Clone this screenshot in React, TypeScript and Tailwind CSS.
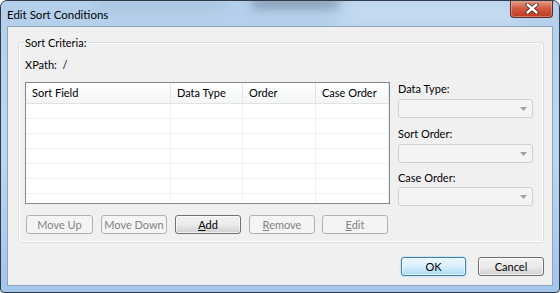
import React from 'react'

const font = { fontFamily: 'Lato, "Noto Sans", sans-serif' }

function DisabledButton({ children, w = 'w-[66px]' }: { children: React.ReactNode; w?: string }) {
  return (
    <div className={`${w} h-[19px] flex items-center justify-center whitespace-nowrap rounded-[3px] border border-[#adb2b5] bg-[#f4f4f4] text-[#838383] leading-none`}>
      {children}
    </div>
  )
}

function NormalButton({ children, isDefault = false }: { children: React.ReactNode; isDefault?: boolean }) {
  return (
    <div
      className={
        isDefault
          ? 'w-[65px] h-[19px] flex items-center justify-center whitespace-nowrap rounded-[3px] border border-[#3c7fb1] bg-gradient-to-b from-[#eaf6fd] via-[#d9f0fc] to-[#a7d9f5] shadow-[inset_0_0_0_1px_#ffffffb0,0_0_2px_#7ec4ee] text-black leading-none'
          : 'w-[66px] h-[19px] flex items-center justify-center whitespace-nowrap rounded-[3px] border border-[#707070] bg-gradient-to-b from-[#f2f2f2] via-[#ebebeb] to-[#cfcfcf] shadow-[inset_0_0_0_1px_#ffffffb0] text-black leading-none'
      }
    >
      {children}
    </div>
  )
}

function Combo() {
  return (
    <div className="w-[135px] h-[19px] rounded-[3px] border border-[#cfcfcf] bg-[#f4f4f4] flex items-center justify-end pr-[5px]">
      <svg width="7" height="4" viewBox="0 0 7 4">
        <path d="M0 0h7L3.5 4z" fill="#a0a0a0" />
      </svg>
    </div>
  )
}

const columns = [
  { name: 'Sort Field', w: 'w-[145px]' },
  { name: 'Data Type', w: 'w-[72px]' },
  { name: 'Order', w: 'w-[73px]' },
  { name: 'Case Order', w: 'flex-1' },
]

function SortList() {
  return (
    <div className="w-[365px] h-[122px] border border-[#828790] bg-white flex flex-col overflow-hidden">
      <div className="h-[21px] flex shrink-0 bg-gradient-to-b from-white to-[#f4f5f6] border-b border-[#e2e3e5]">
        {columns.map((c) => (
          <div key={c.name} className={`${c.w} border-r border-[#e3e4e6] flex items-center pl-[6px] text-black`}>
            {c.name}
          </div>
        ))}
      </div>
      {[0, 1, 2, 3, 4, 5, 6].map((r) => (
        <div key={r} className="h-[15px] flex border-b border-[#f0f0f0] shrink-0">
          {columns.map((c) => (
            <div key={c.name} className={`${c.w} border-r border-[#f0f0f0]`} />
          ))}
        </div>
      ))}
    </div>
  )
}

export default function App() {
  return (
    <div className="w-[560px] h-[293px] text-[11px] text-black" style={font}>
      <div className="relative w-[560px] h-[293px] flex flex-col rounded-t-[7px] rounded-b-[4px] border border-[#2f3b48] bg-gradient-to-b from-[#b4cfeb] via-[#bed7f0] to-[#a4c5ea] px-[6px] pb-[6px] overflow-hidden">
        {/* blurred background showing through the glass */}
        <div className="absolute left-[250px] top-[-4px] w-[90px] h-[12px] rounded-full bg-[#6f8399] blur-[5px] opacity-60" />
        <div className="absolute left-[95px] top-[2px] w-[130px] h-[6px] rounded-full bg-[#9fb4c9] blur-[4px] opacity-50" />
        <div className="absolute left-[340px] top-[0px] w-[180px] h-[26px] bg-[#d2e4f6] blur-[10px] opacity-60" />

        {/* title bar */}
        <div className="relative h-[25px] flex items-start justify-between shrink-0">
          <div className="pt-[6px] text-black text-[11.5px] leading-[15px]">Edit Sort Conditions</div>
          <div className="w-[43px] h-[18px] -mt-[1px] rounded-b-[4px] border border-[#5b2a22] border-t-0 bg-gradient-to-b from-[#e8a693] via-[#d0593f] to-[#c03a22] shadow-[inset_0_0_0_1px_#f0b8a880] flex items-center justify-center">
            <svg width="14" height="11" viewBox="0 0 14 11">
              <path d="M2.5 1.5l9 8M11.5 1.5l-9 8" stroke="#4a2018" strokeWidth="4.2" strokeLinecap="round" />
              <path d="M2.5 1.5l9 8M11.5 1.5l-9 8" stroke="#ffffff" strokeWidth="2.4" strokeLinecap="round" />
            </svg>
          </div>
        </div>

        {/* client area */}
        <div className="relative flex-1 border border-[#8ea4bc] bg-[#f0f0f0] pl-[10px] pt-[15px] flex flex-col">
          <div className="relative w-[526px] h-[201px] border border-[#d5dfe5] rounded-[3px] shadow-[inset_0_0_0_1px_#ffffff]">
            <div className="absolute left-[5px] top-[-8px] px-[1px] bg-[#f0f0f0] leading-[15px]">Sort Criteria:</div>
            <div className="flex">
              <div className="pl-[6px] flex flex-col">
                <div className="pt-[14px] leading-[15px]">XPath:&nbsp; /</div>
                <div className="mt-[10px]">
                  <SortList />
                </div>
                <div className="mt-[11px] flex gap-[8px] pl-[1px]">
                  <DisabledButton w="w-[67px]">Move Up</DisabledButton>
                  <DisabledButton>Move Down</DisabledButton>
                  <NormalButton>
                    <span>
                      <span className="underline">A</span>dd
                    </span>
                  </NormalButton>
                  <DisabledButton>
                    <span>
                      <span className="underline">R</span>emove
                    </span>
                  </DisabledButton>
                  <div className="-ml-[1px]">
                    <DisabledButton>
                      <span>
                        <span className="underline">E</span>dit
                      </span>
                    </DisabledButton>
                  </div>
                </div>
              </div>
              <div className="ml-[8px] pt-[38px] flex flex-col">
                <div className="leading-[15px]">Data Type:</div>
                <div className="mt-[3px]">
                  <Combo />
                </div>
                <div className="mt-[8px] leading-[15px]">Sort Order:</div>
                <div className="mt-[3px]">
                  <Combo />
                </div>
                <div className="mt-[7px] leading-[15px]">Case Order:</div>
                <div className="mt-[2px]">
                  <Combo />
                </div>
              </div>
            </div>
          </div>
          <div className="w-[526px] mt-[14px] flex justify-end gap-[12px]">
            <NormalButton isDefault>OK</NormalButton>
            <NormalButton>Cancel</NormalButton>
          </div>
        </div>
      </div>
    </div>
  )
}
